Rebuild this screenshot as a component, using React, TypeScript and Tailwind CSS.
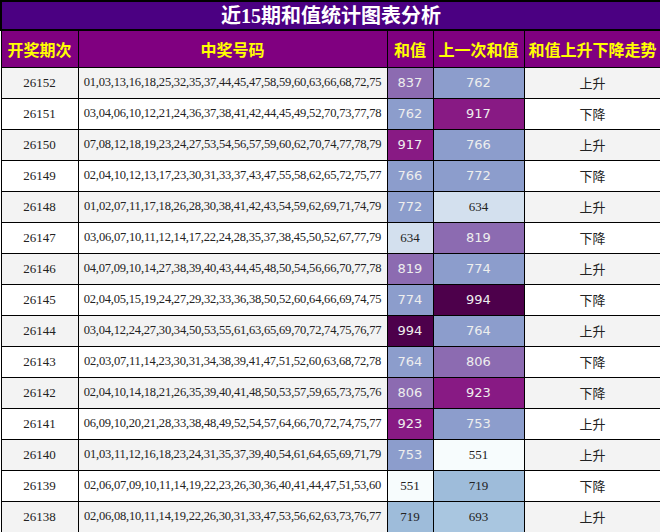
const rows: [string, string, number, number, string][] = [
["26152","01,03,13,16,18,25,32,35,37,44,45,47,58,59,60,63,66,68,72,75",837,762,"上升"],
["26151","03,04,06,10,12,21,24,36,37,38,41,42,44,45,49,52,70,73,77,78",762,917,"下降"],
["26150","07,08,12,18,19,23,24,27,53,54,56,57,59,60,62,70,74,77,78,79",917,766,"上升"],
["26149","02,04,10,12,13,17,23,30,31,33,37,43,47,55,58,62,65,72,75,77",766,772,"下降"],
["26148","01,02,07,11,17,18,26,28,30,38,41,42,43,54,59,62,69,71,74,79",772,634,"上升"],
["26147","03,06,07,10,11,12,14,17,22,24,28,35,37,38,45,50,52,67,77,79",634,819,"下降"],
["26146","04,07,09,10,14,27,38,39,40,43,44,45,48,50,54,56,66,70,77,78",819,774,"上升"],
["26145","02,04,05,15,19,24,27,29,32,33,36,38,50,52,60,64,66,69,74,75",774,994,"下降"],
["26144","03,04,12,24,27,30,34,50,53,55,61,63,65,69,70,72,74,75,76,77",994,764,"上升"],
["26143","02,03,07,11,14,23,30,31,34,38,39,41,47,51,52,60,63,68,72,78",764,806,"下降"],
["26142","02,04,10,14,18,21,26,35,39,40,41,48,50,53,57,59,65,73,75,76",806,923,"下降"],
["26141","06,09,10,20,21,28,33,38,48,49,52,54,57,64,66,70,72,74,75,77",923,753,"上升"],
["26140","01,03,11,12,16,18,23,24,31,35,37,39,40,54,61,64,65,69,71,79",753,551,"上升"],
["26139","02,06,07,09,10,11,14,19,22,23,26,30,36,40,41,44,47,51,53,60",551,719,"下降"],
["26138","02,06,08,10,11,14,19,22,26,30,31,33,47,53,56,62,63,73,76,77",719,693,"上升"],
];
function col(v: number): [string, boolean] {
  if (v >= 980) return ["#4d004b", true];
  if (v >= 900) return ["#881a84", true];
  if (v >= 800) return ["#8c6bb1", true];
  if (v >= 740) return ["#8c9dcc", true];
  if (v >= 710) return ["#9ebcda", false];
  if (v >= 680) return ["#a9c6e0", false];
  if (v >= 600) return ["#d3e0ee", false];
  return ["#f7fcfd", false];
}
function V({ v }: { v: number }) {
  const [bg, light] = col(v);
  return (
    <td className="border border-black text-center text-[13px]" style={{ background: bg, color: light ? "#eeeeee" : "#222", fontFamily: light ? '"DejaVu Sans", sans-serif' : '"Liberation Serif", serif' }}>{v}</td>
  );
}
export default function App() {
  return (
    <div className="w-[660px] h-[532px] bg-white overflow-hidden" style={{ fontFamily: '"Liberation Serif", "Noto Sans CJK SC", serif' }}>
      <table className="w-[660px] border-collapse table-fixed">
        <colgroup>
          <col className="w-[77px]" /><col className="w-[309px]" /><col className="w-[46px]" /><col className="w-[91px]" /><col className="w-[137px]" />
        </colgroup>
        <thead>
          <tr className="h-[29px]"><th colSpan={5} className="bg-[#4b0082] text-white text-[20px] font-bold border-2 border-black leading-none">近15期和值统计图表分析</th></tr>
          <tr className="h-[37px] bg-[#800080] text-[#ffff00] text-[16px] font-bold" style={{ fontFamily: '"Noto Sans CJK SC", sans-serif' }}>
            <th className="border border-black">开奖期次</th>
            <th className="border border-black">中奖号码</th>
            <th className="border border-black">和值</th>
            <th className="border border-black">上一次和值</th>
            <th className="border border-black">和值上升下降走势</th>
          </tr>
        </thead>
        <tbody>
          {rows.map((r, i) => (
            <tr key={r[0]} className={`h-[31px] ${i % 2 === 0 ? "bg-[#f3f3f3]" : "bg-white"} text-[#222]`}>
              <td className="border border-black text-center text-[13px]">{r[0]}</td>
              <td className="border border-black text-center text-[12.5px] tracking-[-0.2px] whitespace-nowrap">{r[1]}</td>
              <V v={r[2]} />
              <V v={r[3]} />
              <td className="border border-black text-center text-[13px]" style={{ fontFamily: '"Noto Sans CJK SC", sans-serif' }}>{r[4]}</td>
            </tr>
          ))}
        </tbody>
      </table>
    </div>
  );
}
